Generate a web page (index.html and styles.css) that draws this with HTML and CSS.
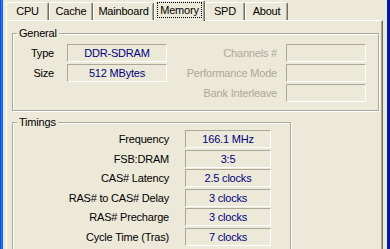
FILE: index.html
```html
<!DOCTYPE html>
<html lang="en">
<head>
    <meta charset="UTF-8">
    <meta name="viewport" content="width=device-width, initial-scale=1.0">
    <title>CPU-Z - Memory</title>
    <link rel="stylesheet" href="styles.css">
</head>
<body>

<div class="window">
    <div class="frame-left"></div>

    <div class="client">
        <!-- Onglets -->
        <div class="tabs">
            <div class="tab tab-cpu">CPU</div>
            <div class="tab tab-cache">Cache</div>
            <div class="tab tab-mainboard">Mainboard</div>
            <div class="tab tab-memory selected"><span class="focus">Memory</span></div>
            <div class="tab tab-spd">SPD</div>
            <div class="tab tab-about">About</div>
        </div>

        <div class="panel">
            <div class="group general">
                <span class="legend">General</span>

                <div class="label">Type</div>
                <div class="field">DDR-SDRAM</div>
                <div class="label label-right off">Channels #</div>
                <div class="field"></div>

                <div class="label">Size</div>
                <div class="field">512 MBytes</div>
                <div class="label label-right off">Performance Mode</div>
                <div class="field"></div>

                <div class="label"></div>
                <div></div>
                <div class="label label-right off">Bank Interleave</div>
                <div class="field"></div>
            </div>

            <div class="group timings">
                <span class="legend">Timings</span>

                <div class="label">Frequency</div>
                <div class="field">166.1 MHz</div>
                <div class="label">FSB:DRAM</div>
                <div class="field">3:5</div>
                <div class="label">CAS# Latency</div>
                <div class="field">2.5 clocks</div>
                <div class="label">RAS# to CAS# Delay</div>
                <div class="field">3 clocks</div>
                <div class="label">RAS# Precharge</div>
                <div class="field">3 clocks</div>
                <div class="label">Cycle Time (Tras)</div>
                <div class="field">7 clocks</div>
            </div>
        </div>
    </div>

    <div class="frame-right"></div>
</div>

</body>
</html>
```

FILE: styles.css
```css
html, body {
    margin: 0;
    padding: 0;
    height: 100%;
    overflow: hidden;
}
body {
    background: #ECE9D8;
    font-family: "Liberation Sans", Arial, sans-serif;
    font-size: 11px;
    letter-spacing: -0.2px;
    color: #000;
}
.window {
    display: flex;
    height: 249px;
}
/* Bords bleus de la fenetre XP */
.frame-left {
    width: 3px;
    background: linear-gradient(to right, #0831d9, #2a7cf4 50%, #0055e5);
}
.frame-right {
    width: 3px;
    background: linear-gradient(to right, #0019cf, #00138c);
}
.client {
    flex: 1;
    min-width: 0;
    display: flex;
    flex-direction: column;
    padding: 0 4px 0 3px;
}

/* Onglets */
.tabs {
    display: flex;
    align-items: flex-end;
    height: 22px;
}
.tab {
    box-sizing: border-box;
    height: 18px;
    line-height: 17px;
    text-align: center;
    white-space: nowrap;
    border-top: 1px solid #fff;
    border-left: 1px solid #fff;
    border-right: 1px solid #716F64;
    border-radius: 2px 2px 0 0;
    box-shadow: inset -1px 0 0 #ACA899;
}
.tab-cpu { width: 43px; }
.tab-cache { width: 44px; }
.tab-mainboard { width: 61px; }
.tab-memory { width: 51px; }
.tab-spd { width: 40px; }
.tab-about { width: 43px; }
.selected {
    height: 21px;
    margin-bottom: -1px;
    position: relative;
    z-index: 2;
    background: #ECE9D8;
}
.focus {
    display: block;
    box-sizing: border-box;
    height: 16px;
    margin: 1px 2px 0 2px;
    border: 1px dotted #000;
    line-height: 14px;
}

/* Panneau */
.panel {
    flex: 1;
    border-top: 1px solid #fff;
    border-left: 1px solid #fff;
    border-right: 1px solid #716F64;
    box-shadow: inset -1px 0 0 #ACA899;
    padding: 12px 3px 0 5px;
}
.group {
    position: relative;
    display: grid;
    border: 1px solid #ACA899;
    box-shadow: inset 1px 1px 0 #fff, 1px 1px 0 #fff;
}
.legend {
    position: absolute;
    top: -7px;
    left: 4px;
    padding: 0 2px;
    line-height: 13px;
    background: #ECE9D8;
}
.general {
    grid-template-columns: 54px 100px 119px 80px;
    grid-auto-rows: 18px;
    row-gap: 2px;
    padding: 10px 0 8px 0;
}
.timings {
    box-sizing: border-box;
    width: 279px;
    height: 140px;
    margin-top: 11px;
    grid-template-columns: 172px 86px;
    grid-auto-rows: 18px;
    align-content: start;
    row-gap: 1.5px;
    padding-top: 7px;
}
.label {
    text-align: right;
    white-space: nowrap;
    line-height: 18px;
    padding-right: 13px;
}
.timings .label {
    padding-right: 16px;
}
.general .label-right {
    padding-right: 9px;
}
.off {
    color: #ACA899;
}
.field {
    box-sizing: border-box;
    border: 1px solid;
    border-color: #ACA899 #fff #fff #ACA899;
    color: #000080;
    text-align: center;
    white-space: nowrap;
    line-height: 16px;
}
```
